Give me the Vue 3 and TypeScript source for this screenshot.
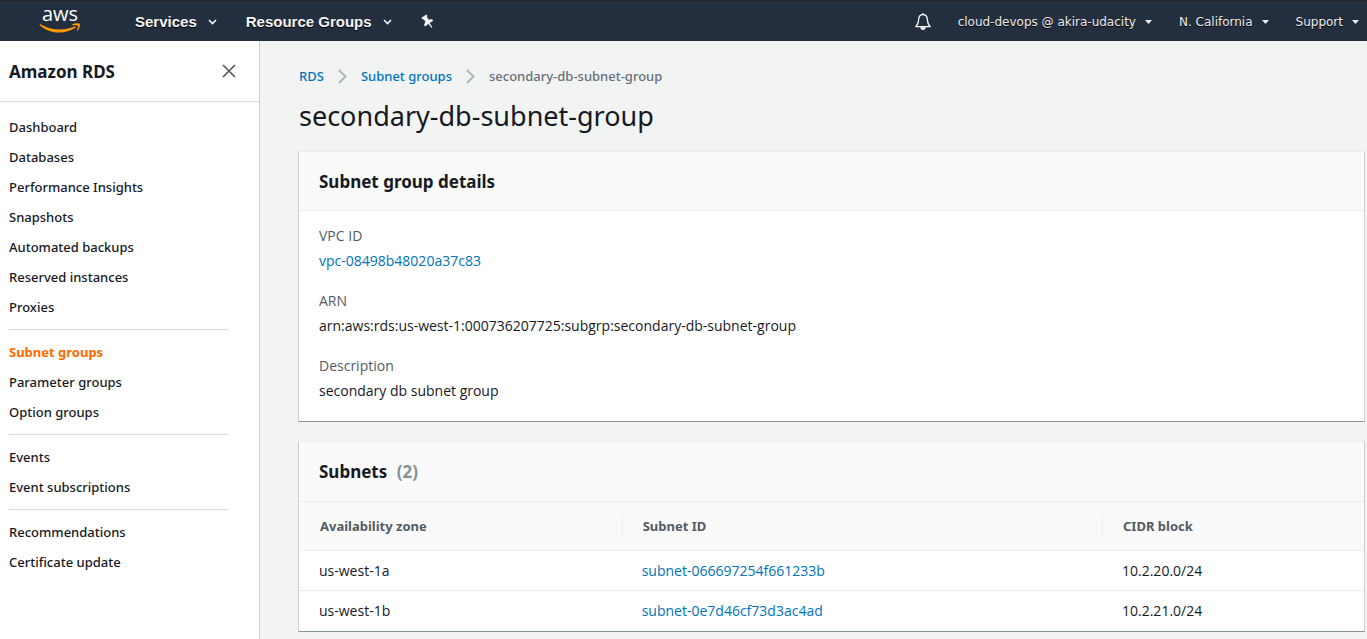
<script setup lang="ts">
interface Subnet {
  zone: string
  id: string
  cidr: string
}

const navGroups: string[][] = [
  ['Dashboard', 'Databases', 'Performance Insights', 'Snapshots', 'Automated backups', 'Reserved instances', 'Proxies'],
  ['Subnet groups', 'Parameter groups', 'Option groups'],
  ['Events', 'Event subscriptions'],
  ['Recommendations', 'Certificate update'],
]
const activeItem = 'Subnet groups'

const accountMenus: string[] = ['cloud-devops @ akira-udacity', 'N. California', 'Support']

const subnets: Subnet[] = [
  { zone: 'us-west-1a', id: 'subnet-066697254f661233b', cidr: '10.2.20.0/24' },
  { zone: 'us-west-1b', id: 'subnet-0e7d46cf73d3ac4ad', cidr: '10.2.21.0/24' },
]
</script>

<template>
  <div class="console">
    <header class="topbar">
      <a class="logo" href="#" aria-label="AWS home">
        <span class="logo-text">aws</span>
        <svg class="smile" width="42" height="11" viewBox="0 0 42 11" aria-hidden="true">
          <path d="M0.6 1.6C0.9 1.1 1.4 1.1 2 1.5C8 4.9 14 6.5 20.500 6.500C25.500 6.500 31 5.400 35.500 3.500C36.600 3.100 37.300 4.100 36.400 4.800C32 8 26 9.600 20.500 9.600C13 9.600 6 6.800 1 2.400C0.700 2.100 0.500 1.900 0.600 1.600Z" fill="#f90" />
          <path d="M33.200 1.400C35.500 -0.100 40 0 40.700 0.700C41.400 1.500 40.500 6 38.300 7.900C38 8.200 37.600 8 37.800 7.600C38.300 6.400 39.400 3.700 38.900 2.900C38.300 2.200 35.200 2.200 33.600 2.200C33 2.200 32.800 1.700 33.200 1.400Z" fill="#f90" />
        </svg>
      </a>
      <nav class="services" aria-label="Services">
        <button type="button" class="menu">
          Services
          <svg width="9" height="6" viewBox="0 0 9 6" aria-hidden="true"><path d="M1 1L4.500 4.500L8 1" fill="none" stroke="currentColor" stroke-width="1.600" /></svg>
        </button>
        <button type="button" class="menu">
          Resource Groups
          <svg width="9" height="6" viewBox="0 0 9 6" aria-hidden="true"><path d="M1 1L4.500 4.500L8 1" fill="none" stroke="currentColor" stroke-width="1.600" /></svg>
        </button>
        <button type="button" class="menu" aria-label="Pin shortcuts">
          <svg class="pin" width="14" height="16" viewBox="0 0 14 16" aria-hidden="true">
            <path transform="rotate(-35 7 8)" d="M4 0.800H10V2.800L9 3.300V6.300L12 8.200V9.900H7.800L7.500 15H6.500L6.200 9.900H2V8.200L5 6.300V3.300L4 2.800Z" fill="currentColor" />
          </svg>
        </button>
      </nav>
      <div class="account">
        <button type="button" class="bell" aria-label="Notifications">
          <svg width="16" height="18" viewBox="0 0 16 18" aria-hidden="true">
            <path d="M8 1.700C5 1.700 3.800 4 3.700 6.500C3.600 9.800 2.900 11.400 0.800 13.700H15.200C13.100 11.400 12.400 9.800 12.300 6.500C12.200 4 11 1.700 8 1.700Z" fill="none" stroke="currentColor" stroke-width="1.300" stroke-linejoin="round" />
            <path d="M7.200 0.300H8.800V2H7.200ZM5.200 14.300H10.800C10.600 16 9.500 17 8 17C6.500 17 5.400 16 5.200 14.300Z" fill="currentColor" />
          </svg>
        </button>
        <button v-for="menu in accountMenus" :key="menu" type="button" class="account-menu">
          {{ menu }}
          <svg width="7" height="4" viewBox="0 0 7 4" aria-hidden="true"><path d="M0 0H7L3.500 4Z" fill="currentColor" /></svg>
        </button>
      </div>
    </header>

    <div class="body">
      <aside class="sidebar">
        <div class="sidebar-head">
          <h2>Amazon RDS</h2>
          <button type="button" class="close" aria-label="Close navigation">
            <svg width="14" height="14" viewBox="0 0 14 14" aria-hidden="true"><path d="M1 1L13 13M13 1L1 13" stroke="currentColor" stroke-width="1.700" /></svg>
          </button>
        </div>
        <nav class="sidebar-nav" aria-label="Amazon RDS">
          <ul v-for="(group, index) in navGroups" :key="index">
            <li v-for="item in group" :key="item">
              <a href="#" :class="{ active: item === activeItem }">{{ item }}</a>
            </li>
          </ul>
        </nav>
      </aside>

      <main>
        <nav class="breadcrumbs" aria-label="Breadcrumbs">
          <a href="#">RDS</a>
          <svg width="9" height="15" viewBox="0 0 9 15" aria-hidden="true"><path d="M1 1L7.500 7.500L1 14" fill="none" stroke="currentColor" stroke-width="1.800" /></svg>
          <a href="#">Subnet groups</a>
          <svg width="9" height="15" viewBox="0 0 9 15" aria-hidden="true"><path d="M1 1L7.500 7.500L1 14" fill="none" stroke="currentColor" stroke-width="1.800" /></svg>
          <span>secondary-db-subnet-group</span>
        </nav>
        <h1>secondary-db-subnet-group</h1>

        <section class="card">
          <h2>Subnet group details</h2>
          <dl>
            <div>
              <dt>VPC ID</dt>
              <dd><a href="#">vpc-08498b48020a37c83</a></dd>
            </div>
            <div>
              <dt>ARN</dt>
              <dd>arn:aws:rds:us-west-1:000736207725:subgrp:secondary-db-subnet-group</dd>
            </div>
            <div>
              <dt>Description</dt>
              <dd>secondary db subnet group</dd>
            </div>
          </dl>
        </section>

        <section class="card">
          <h2 class="table-title">Subnets <span class="count">({{ subnets.length }})</span></h2>
          <table>
            <colgroup>
              <col class="col-zone" />
              <col class="col-id" />
              <col />
            </colgroup>
            <thead>
              <tr>
                <th scope="col"><div>Availability zone</div></th>
                <th scope="col"><div>Subnet ID</div></th>
                <th scope="col"><div>CIDR block</div></th>
              </tr>
            </thead>
            <tbody>
              <tr v-for="subnet in subnets" :key="subnet.id">
                <td>{{ subnet.zone }}</td>
                <td><a href="#">{{ subnet.id }}</a></td>
                <td>{{ subnet.cidr }}</td>
              </tr>
            </tbody>
          </table>
        </section>
      </main>
    </div>
  </div>
</template>

<style>
body {
  margin: 0;
  background: #f2f3f3;
}
</style>

<style scoped>
.console {
  display: flex;
  flex-direction: column;
  min-height: 100vh;
  box-sizing: border-box;
  font: 14px/20px "Open Sans", "Noto Sans", sans-serif;
  color: #16191f;
}
a {
  color: #0073bb;
  text-decoration: none;
}
button {
  display: flex;
  align-items: center;
  padding: 0;
  border: 0;
  background: none;
  color: inherit;
  font: inherit;
}
h1,
h2,
ul,
dl,
dd {
  margin: 0;
  padding: 0;
}
h1,
h2,
th,
.sidebar-nav,
.breadcrumbs {
  font-family: "Noto Sans", "Open Sans", sans-serif;
}

.topbar {
  display: flex;
  align-items: center;
  height: 40px;
  border-top: 1px solid #262626;
  background: #232f3e;
  color: #fff;
}
.logo {
  display: flex;
  flex-direction: column;
  align-items: center;
  width: 42px;
  margin-left: 39px;
  padding-bottom: 2px;
  color: #fff;
}
.logo-text {
  font: 20px/14px "Open Sans", sans-serif;
}
.smile {
  margin-top: 2px;
}
.services {
  display: flex;
  align-items: center;
  gap: 29px;
  margin-left: 54px;
  padding-top: 2px;
}
.menu {
  gap: 11px;
  color: #f4f4f4;
  font: bold 15px/20px "Liberation Sans", Arial, sans-serif;
  text-shadow: 0 1px 0 #000;
}
.account {
  display: flex;
  align-items: center;
  gap: 27px;
  margin-left: auto;
  padding: 2px 8px 0 0;
}
.account-menu {
  gap: 9px;
  color: #eee;
  font: 12px/20px "DejaVu Sans", Verdana, sans-serif;
  text-shadow: 0 1px 0 #000;
}

.body {
  display: flex;
  flex: 1;
}
.sidebar {
  flex: 0 0 259px;
  border-right: 1px solid #c9cfd0;
  background: #fff;
}
.sidebar-head {
  display: flex;
  align-items: center;
  justify-content: space-between;
  height: 60px;
  padding: 0 23px 0 9px;
  border-bottom: 1px solid #d5dbdb;
}
.sidebar-head h2 {
  padding-top: 2px;
  font-size: 17px;
  line-height: 22px;
}
.close {
  color: #545b64;
}
.sidebar-nav {
  padding: 10px 30px 10px 9px;
}
.sidebar-nav ul {
  list-style: none;
}
.sidebar-nav ul + ul {
  margin-top: 7px;
  padding-top: 7px;
  border-top: 1px solid #d5dbdb;
}
.sidebar-nav a {
  display: block;
  padding: 5px 0;
  color: #16191f;
  font-size: 13px;
  font-weight: 500;
}
.sidebar-nav a.active {
  color: #ff6a00;
  font-weight: bold;
}

main {
  flex: 1;
  min-width: 0;
  padding: 25px 2px 8px 38px;
}
.breadcrumbs {
  display: flex;
  align-items: center;
  gap: 14px;
  padding-left: 1px;
  color: #687078;
  font-size: 13px;
  font-weight: 500;
}
.breadcrumbs svg {
  color: #aab7b8;
}
h1 {
  margin: 12px 0 17px;
  padding-left: 1px;
  font-size: 27px;
  font-weight: 400;
  line-height: 36px;
}
.card {
  border: 1px solid #c9cfd0;
  border-top-color: #eaeded;
  border-bottom-color: #879596;
  background: #fff;
}
.card + .card {
  margin-top: 19px;
}
.card h2 {
  padding: 18px 20px 17px;
  border-bottom: 1px solid #eaeded;
  background: #fafafa;
  font-size: 17px;
  line-height: 23px;
}
.card .table-title {
  padding-bottom: 18px;
}
.count {
  margin-left: 5px;
  color: #879196;
}
dl {
  display: grid;
  gap: 20px;
  padding: 15px 20px 20px;
}
dt {
  margin-bottom: 5px;
  color: #545b64;
}
table {
  width: 100%;
  border-collapse: collapse;
  table-layout: fixed;
}
.col-zone {
  width: 30.3%;
}
.col-id {
  width: 45.1%;
}
th {
  padding: 12px 0;
  background: #fafafa;
  color: #545b64;
  font-size: 13px;
  text-align: left;
}
th div {
  padding: 2px 20px;
  border-left: 1px solid #eaeded;
}
th:first-child div {
  border-left-color: transparent;
}
td {
  padding: 10px 20px 9px;
  border-top: 1px solid #eaeded;
}
tr:last-child td {
  padding-bottom: 10px;
}
</style>
